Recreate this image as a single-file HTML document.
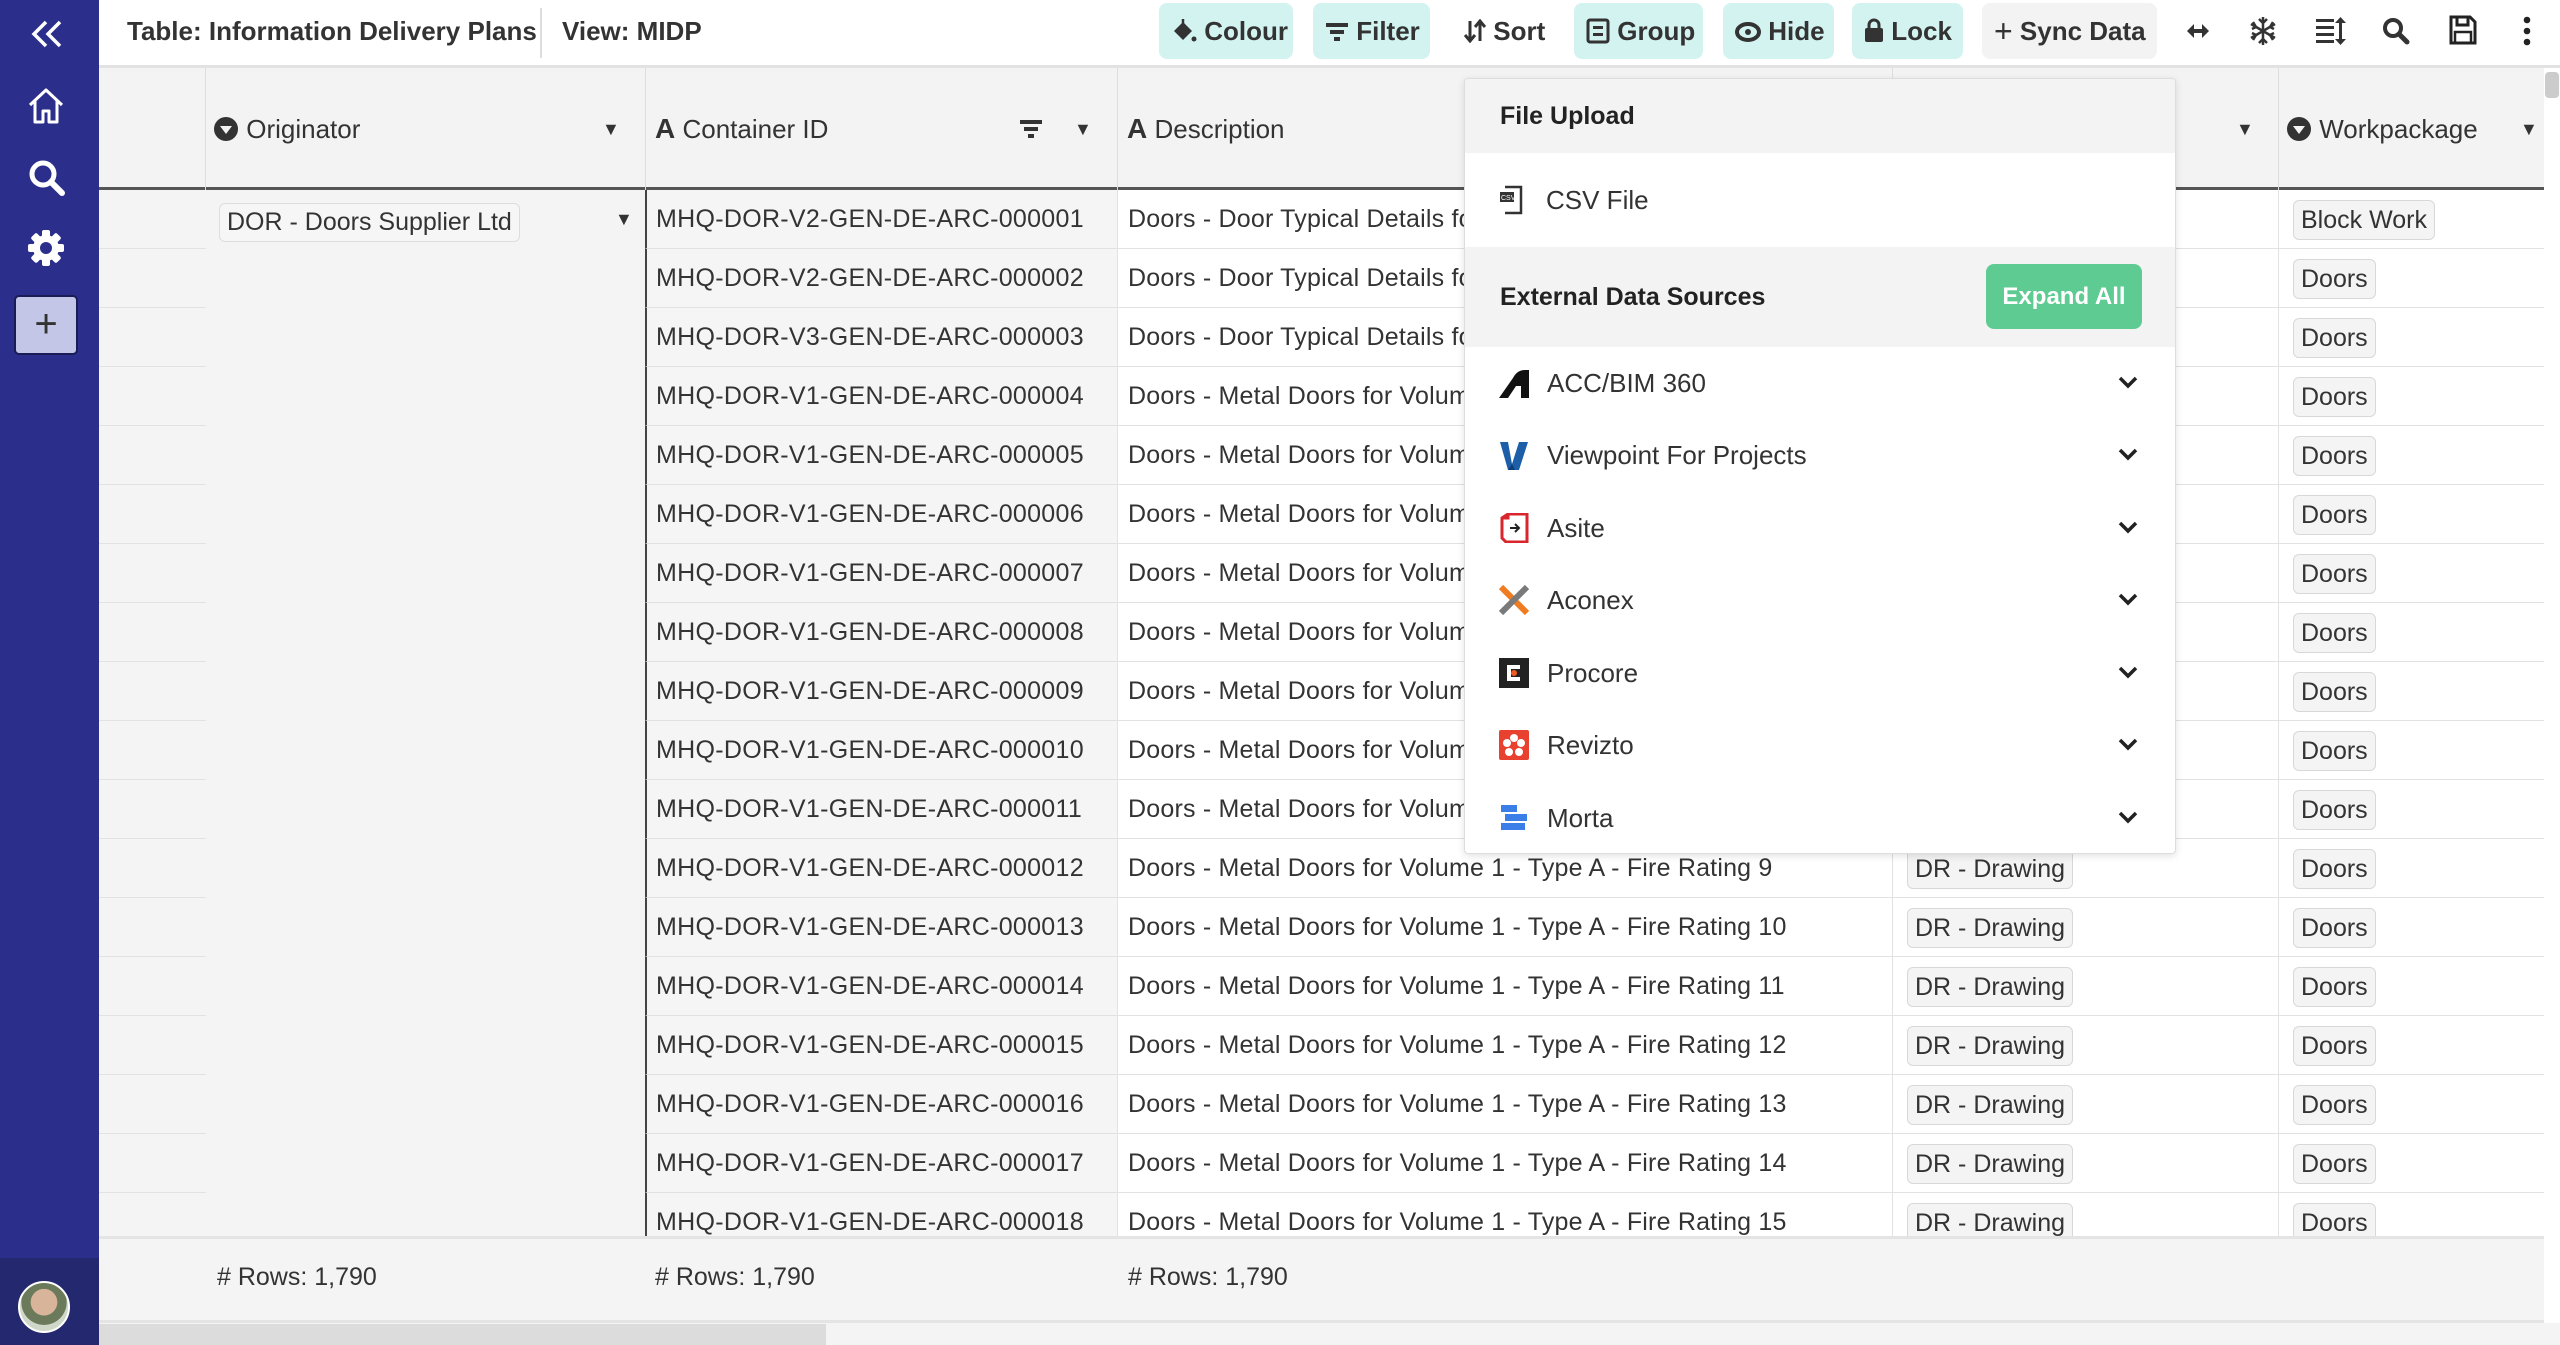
<!DOCTYPE html>
<html><head><meta charset="utf-8"><style>
*{box-sizing:border-box;margin:0;padding:0}
body{width:2560px;height:1345px;overflow:hidden;background:#fff;font-family:"Liberation Sans",sans-serif;color:#333;position:relative}
.abs{position:absolute}
.sb{left:0;top:0;width:99px;height:1345px;background:#2b2f8b}
.tb{left:99px;top:0;width:2461px;height:68px;background:#fff;border-bottom:3px solid #e2e2e2}
.btn{position:absolute;top:3px;height:56px;border-radius:8px;font-size:26px;font-weight:bold;line-height:56px;color:#333;padding-left:12px;white-space:nowrap}
.cy{background:#d3f3f1}
.hdr{left:99px;top:68px;width:2445px;height:122px;background:#f3f3f3;border-bottom:3px solid #555}
.hc{position:absolute;top:68px;height:122px;line-height:122px;font-size:26px;color:#333;white-space:nowrap}
.r{position:absolute;left:0;width:2560px;height:59px}
.c{position:absolute;top:0;height:59px;border-bottom:1px solid #e2e2e2;line-height:58px;white-space:nowrap;overflow:hidden;font-size:25px;color:#333}
.g{left:99px;width:107px;background:#f4f4f4}
.id{left:645px;width:472px;background:#f5f5f5;padding-left:9px;border-left:2px solid #444;letter-spacing:0.3px}
.d{left:1117px;width:775px;background:#fff;padding-left:10px;border-left:1px solid #e2e2e2;letter-spacing:0.2px}
.t{left:1892px;width:386px;background:#fff;border-left:1px solid #e2e2e2}
.w{left:2278px;width:266px;background:#fff;border-left:1px solid #e2e2e2}
.tag{display:inline-block;border:1px solid #d8d8d8;background:#f4f4f4;border-radius:6px;padding:0 7px;line-height:38px;margin-left:14px;vertical-align:middle}
.pop{left:1464px;top:78px;width:712px;height:776px;background:#fff;border:1px solid #ddd;border-radius:4px;box-shadow:0 2px 8px rgba(0,0,0,.12);z-index:10;overflow:hidden}
.it{position:absolute;left:0;width:712px;height:72px;font-size:26px;line-height:72px}
.it .ic{position:absolute;left:34px;top:21px;width:30px;height:30px}
.it .tx{position:absolute;left:82px}
.it .ch{position:absolute;left:652px;top:24px}
</style></head><body>

<div class="abs sb"></div>
<div class="abs" style="left:0;top:1258px;width:99px;height:87px;background:#24286f"></div>
<svg class="abs" style="left:28px;top:18px" width="40" height="32" viewBox="0 0 40 32"><path d="M18 4 L6 16 L18 28 M32 4 L20 16 L32 28" fill="none" stroke="#fff" stroke-width="3.5"/></svg>
<svg class="abs" style="left:26px;top:86px" width="40" height="40" viewBox="0 0 40 40"><path d="M4 19 L20 4 L36 19 M9 15 V36 H17 V25 H23 V36 H31 V15" fill="none" stroke="#fff" stroke-width="3" stroke-linejoin="round"/></svg>
<svg class="abs" style="left:27px;top:158px" width="40" height="40" viewBox="0 0 40 40"><circle cx="16" cy="16" r="11" fill="none" stroke="#fff" stroke-width="5"/><path d="M24 24 L35 35" stroke="#fff" stroke-width="6" stroke-linecap="round"/></svg>
<svg class="abs" style="left:26px;top:228px" width="40" height="40" viewBox="0 0 40 40"><g fill="#fff"><circle cx="20" cy="20" r="13"/><rect x="16" y="2" width="8" height="36" rx="2"/><rect x="16" y="2" width="8" height="36" rx="2" transform="rotate(45 20 20)"/><rect x="16" y="2" width="8" height="36" rx="2" transform="rotate(90 20 20)"/><rect x="16" y="2" width="8" height="36" rx="2" transform="rotate(135 20 20)"/></g><circle cx="20" cy="20" r="6" fill="#2b2f8b"/></svg>
<div class="abs" style="left:14px;top:295px;width:64px;height:60px;background:#c3c6e6;border:2px solid #1a1d55;border-radius:5px;text-align:center;line-height:54px;font-size:40px;color:#333">+</div>
<div class="abs" style="left:18px;top:1281px;width:52px;height:52px;border-radius:50%;background:radial-gradient(circle at 50% 40%,#d8b49a 0 35%,#6b7a5a 36% 60%,#cfd8c8 61%);border:2px solid #fff"></div>

<div class="abs tb"></div>
<div class="abs" style="left:127px;top:14px;font-size:26px;font-weight:bold;line-height:34px;color:#333">Table: Information Delivery Plans</div>
<div class="abs" style="left:540px;top:8px;width:2px;height:50px;background:#ddd"></div>
<div class="abs" style="left:562px;top:14px;font-size:26px;font-weight:bold;line-height:34px;color:#333">View: MIDP</div>

<div class="btn cy" style="left:1159px;width:134px"><svg width="26" height="26" viewBox="0 0 26 26" style="vertical-align:-4px"><path d="M3 13 L12 4 L21 13 L12 22 Z" fill="#333"/><path d="M12 1 V8" stroke="#333" stroke-width="2.5"/><circle cx="23" cy="21" r="2.5" fill="#333"/></svg> Colour</div>
<div class="btn cy" style="left:1313px;width:117px"><svg width="24" height="22" viewBox="0 0 24 22" style="vertical-align:-3px"><rect x="1" y="2" width="22" height="4" fill="#333"/><rect x="5" y="9" width="14" height="4" fill="#333"/><rect x="9" y="16" width="6" height="4" fill="#333"/></svg> Filter</div>
<div class="btn" style="left:1452px;width:104px"><svg width="22" height="24" viewBox="0 0 22 24" style="vertical-align:-3px"><path d="M6 2 V21 M1 16 L6 22 L11 16 M16 22 V3 M11 8 L16 2 L21 8" fill="none" stroke="#333" stroke-width="3"/></svg> Sort</div>
<div class="btn cy" style="left:1574px;width:129px"><svg width="24" height="26" viewBox="0 0 24 26" style="vertical-align:-4px"><rect x="2" y="2" width="20" height="22" rx="2" fill="none" stroke="#333" stroke-width="3"/><rect x="7" y="8" width="10" height="3" fill="#333"/><rect x="7" y="15" width="10" height="3" fill="#333"/></svg> Group</div>
<div class="btn cy" style="left:1723px;width:111px"><svg width="26" height="20" viewBox="0 0 26 20" style="vertical-align:-2px"><ellipse cx="13" cy="10" rx="11" ry="8" fill="none" stroke="#333" stroke-width="4"/><circle cx="13" cy="10" r="3" fill="#333"/></svg> Hide</div>
<div class="btn cy" style="left:1852px;width:111px"><svg width="20" height="26" viewBox="0 0 20 26" style="vertical-align:-3px"><path d="M5 12 V8 a5 5 0 0 1 10 0 V12" fill="none" stroke="#333" stroke-width="3"/><rect x="1" y="11" width="18" height="14" rx="2" fill="#333"/></svg> Lock</div>
<div class="btn" style="left:1982px;width:175px;background:#f3f3f3"><span style="font-weight:normal;font-size:32px;vertical-align:-2px">+</span> Sync Data</div>
<svg class="abs" style="left:2186px;top:22px" width="24" height="18" viewBox="0 0 24 18"><path d="M1 9 L8 2 V16Z M23 9 L16 2 V16Z" fill="#333"/><rect x="7" y="7" width="10" height="4" fill="#333"/></svg>
<svg class="abs" style="left:2249px;top:16px" width="28" height="30" viewBox="0 0 28 30"><g stroke="#333" stroke-width="2.5" fill="none"><path d="M14 1 V29 M2 8 L26 22 M26 8 L2 22"/><path d="M10 3 L14 7 L18 3 M10 27 L14 23 L18 27 M3 13 L7 11 L4 6 M25 13 L21 11 L24 6 M3 17 L7 19 L4 24 M25 17 L21 19 L24 24"/></g></svg>
<svg class="abs" style="left:2316px;top:17px" width="30" height="28" viewBox="0 0 30 28"><g fill="#333"><rect x="0" y="2" width="18" height="3"/><rect x="0" y="9" width="18" height="3"/><rect x="0" y="16" width="18" height="3"/><rect x="0" y="23" width="18" height="3"/><rect x="23" y="4" width="3" height="20"/><path d="M19 6 L24.5 0 L30 6Z M19 22 L24.5 28 L30 22Z"/></g></svg>
<svg class="abs" style="left:2382px;top:17px" width="28" height="28" viewBox="0 0 28 28"><circle cx="11" cy="11" r="8" fill="none" stroke="#333" stroke-width="4"/><path d="M17 17 L25 25" stroke="#333" stroke-width="5" stroke-linecap="round"/></svg>
<svg class="abs" style="left:2449px;top:15px" width="28" height="30" viewBox="0 0 28 30"><path d="M2 2 H21 L26 7 V28 H2 Z" fill="none" stroke="#222" stroke-width="3"/><rect x="8" y="2" width="11" height="8" fill="none" stroke="#222" stroke-width="3"/><rect x="6" y="17" width="16" height="11" fill="none" stroke="#222" stroke-width="2.5"/></svg>
<svg class="abs" style="left:2522px;top:16px" width="10" height="30" viewBox="0 0 10 30"><circle cx="5" cy="4" r="3.3" fill="#222"/><circle cx="5" cy="15" r="3.3" fill="#222"/><circle cx="5" cy="26" r="3.3" fill="#222"/></svg>

<div class="abs hdr"></div>
<div class="abs" style="left:205px;top:68px;width:1px;height:122px;background:#ddd"></div>
<div class="abs" style="left:645px;top:68px;width:1px;height:122px;background:#ddd"></div>
<div class="abs" style="left:1117px;top:68px;width:1px;height:122px;background:#ddd"></div>
<div class="abs" style="left:1892px;top:68px;width:1px;height:122px;background:#ddd"></div>
<div class="abs" style="left:2278px;top:68px;width:1px;height:122px;background:#ddd"></div>
<div class="hc" style="left:213px"><svg width="26" height="26" viewBox="0 0 26 26" style="vertical-align:-4px"><circle cx="13" cy="13" r="12" fill="#333"/><path d="M7 10 H19 L13 18Z" fill="#f3f3f3"/></svg> Originator</div>
<div class="hc" style="left:602px;font-size:18px">▼</div>
<div class="hc" style="left:655px"><b style="font-size:28px">A</b> Container ID</div>
<svg class="abs" style="left:1019px;top:118px" width="24" height="22" viewBox="0 0 24 22"><rect x="1" y="2" width="22" height="4" fill="#333"/><rect x="5" y="9" width="14" height="4" fill="#333"/><rect x="9" y="16" width="6" height="4" fill="#333"/></svg>
<div class="hc" style="left:1074px;font-size:18px">▼</div>
<div class="hc" style="left:1127px"><b style="font-size:28px">A</b> Description</div>
<div class="hc" style="left:2236px;font-size:18px">▼</div>
<div class="hc" style="left:2286px"><svg width="26" height="26" viewBox="0 0 26 26" style="vertical-align:-4px"><circle cx="13" cy="13" r="12" fill="#333"/><path d="M7 10 H19 L13 18Z" fill="#f3f3f3"/></svg> Workpackage</div>
<div class="hc" style="left:2520px;font-size:18px">▼</div>
<div class="abs" style="left:2545px;top:72px;width:14px;height:26px;background:#ccc;border-radius:4px"></div>

<div class="abs" style="left:206px;top:190px;width:439px;height:1046px;background:#f4f4f4"></div>
<div class="abs" style="left:219px;top:203px;height:39px;border:1px solid #ddd;border-radius:6px;background:#f6f6f6;padding:0 7px;font-size:25px;line-height:37px;color:#333;white-space:nowrap">DOR - Doors Supplier Ltd</div>
<div class="abs" style="left:615px;top:205px;font-size:18px;line-height:28px">▼</div>

<div class="r" style="top:190px"><div class="c g"></div><div class="c id">MHQ-DOR-V2-GEN-DE-ARC-000001</div><div class="c d">Doors - Door Typical Details for Volume 1</div><div class="c t"></div><div class="c w"><span class="tag">Block Work</span></div></div>
<div class="r" style="top:249px"><div class="c g"></div><div class="c id">MHQ-DOR-V2-GEN-DE-ARC-000002</div><div class="c d">Doors - Door Typical Details for Volume 2</div><div class="c t"></div><div class="c w"><span class="tag">Doors</span></div></div>
<div class="r" style="top:308px"><div class="c g"></div><div class="c id">MHQ-DOR-V3-GEN-DE-ARC-000003</div><div class="c d">Doors - Door Typical Details for Volume 3</div><div class="c t"></div><div class="c w"><span class="tag">Doors</span></div></div>
<div class="r" style="top:367px"><div class="c g"></div><div class="c id">MHQ-DOR-V1-GEN-DE-ARC-000004</div><div class="c d">Doors - Metal Doors for Volume 1 - Type A - Fire Rating 1</div><div class="c t"></div><div class="c w"><span class="tag">Doors</span></div></div>
<div class="r" style="top:426px"><div class="c g"></div><div class="c id">MHQ-DOR-V1-GEN-DE-ARC-000005</div><div class="c d">Doors - Metal Doors for Volume 1 - Type A - Fire Rating 2</div><div class="c t"></div><div class="c w"><span class="tag">Doors</span></div></div>
<div class="r" style="top:485px"><div class="c g"></div><div class="c id">MHQ-DOR-V1-GEN-DE-ARC-000006</div><div class="c d">Doors - Metal Doors for Volume 1 - Type A - Fire Rating 3</div><div class="c t"></div><div class="c w"><span class="tag">Doors</span></div></div>
<div class="r" style="top:544px"><div class="c g"></div><div class="c id">MHQ-DOR-V1-GEN-DE-ARC-000007</div><div class="c d">Doors - Metal Doors for Volume 1 - Type A - Fire Rating 4</div><div class="c t"></div><div class="c w"><span class="tag">Doors</span></div></div>
<div class="r" style="top:603px"><div class="c g"></div><div class="c id">MHQ-DOR-V1-GEN-DE-ARC-000008</div><div class="c d">Doors - Metal Doors for Volume 1 - Type A - Fire Rating 5</div><div class="c t"></div><div class="c w"><span class="tag">Doors</span></div></div>
<div class="r" style="top:662px"><div class="c g"></div><div class="c id">MHQ-DOR-V1-GEN-DE-ARC-000009</div><div class="c d">Doors - Metal Doors for Volume 1 - Type A - Fire Rating 6</div><div class="c t"></div><div class="c w"><span class="tag">Doors</span></div></div>
<div class="r" style="top:721px"><div class="c g"></div><div class="c id">MHQ-DOR-V1-GEN-DE-ARC-000010</div><div class="c d">Doors - Metal Doors for Volume 1 - Type A - Fire Rating 7</div><div class="c t"></div><div class="c w"><span class="tag">Doors</span></div></div>
<div class="r" style="top:780px"><div class="c g"></div><div class="c id">MHQ-DOR-V1-GEN-DE-ARC-000011</div><div class="c d">Doors - Metal Doors for Volume 1 - Type A - Fire Rating 8</div><div class="c t"></div><div class="c w"><span class="tag">Doors</span></div></div>
<div class="r" style="top:839px"><div class="c g"></div><div class="c id">MHQ-DOR-V1-GEN-DE-ARC-000012</div><div class="c d">Doors - Metal Doors for Volume 1 - Type A - Fire Rating 9</div><div class="c t"><span class="tag">DR - Drawing</span></div><div class="c w"><span class="tag">Doors</span></div></div>
<div class="r" style="top:898px"><div class="c g"></div><div class="c id">MHQ-DOR-V1-GEN-DE-ARC-000013</div><div class="c d">Doors - Metal Doors for Volume 1 - Type A - Fire Rating 10</div><div class="c t"><span class="tag">DR - Drawing</span></div><div class="c w"><span class="tag">Doors</span></div></div>
<div class="r" style="top:957px"><div class="c g"></div><div class="c id">MHQ-DOR-V1-GEN-DE-ARC-000014</div><div class="c d">Doors - Metal Doors for Volume 1 - Type A - Fire Rating 11</div><div class="c t"><span class="tag">DR - Drawing</span></div><div class="c w"><span class="tag">Doors</span></div></div>
<div class="r" style="top:1016px"><div class="c g"></div><div class="c id">MHQ-DOR-V1-GEN-DE-ARC-000015</div><div class="c d">Doors - Metal Doors for Volume 1 - Type A - Fire Rating 12</div><div class="c t"><span class="tag">DR - Drawing</span></div><div class="c w"><span class="tag">Doors</span></div></div>
<div class="r" style="top:1075px"><div class="c g"></div><div class="c id">MHQ-DOR-V1-GEN-DE-ARC-000016</div><div class="c d">Doors - Metal Doors for Volume 1 - Type A - Fire Rating 13</div><div class="c t"><span class="tag">DR - Drawing</span></div><div class="c w"><span class="tag">Doors</span></div></div>
<div class="r" style="top:1134px"><div class="c g"></div><div class="c id">MHQ-DOR-V1-GEN-DE-ARC-000017</div><div class="c d">Doors - Metal Doors for Volume 1 - Type A - Fire Rating 14</div><div class="c t"><span class="tag">DR - Drawing</span></div><div class="c w"><span class="tag">Doors</span></div></div>
<div class="r" style="top:1193px"><div class="c g"></div><div class="c id">MHQ-DOR-V1-GEN-DE-ARC-000018</div><div class="c d">Doors - Metal Doors for Volume 1 - Type A - Fire Rating 15</div><div class="c t"><span class="tag">DR - Drawing</span></div><div class="c w"><span class="tag">Doors</span></div></div>

<div class="abs" style="left:99px;top:1236px;width:2445px;height:87px;background:#f4f4f4;border-top:3px solid #e4e4e4;border-bottom:3px solid #e4e4e4"></div>
<div class="abs" style="left:217px;top:1262px;font-size:25px;line-height:30px">#&nbsp;Rows: 1,790</div>
<div class="abs" style="left:655px;top:1262px;font-size:25px;line-height:30px">#&nbsp;Rows: 1,790</div>
<div class="abs" style="left:1128px;top:1262px;font-size:25px;line-height:30px">#&nbsp;Rows: 1,790</div>
<div class="abs" style="left:99px;top:1323px;width:2461px;height:22px;background:#f4f4f4"></div>
<div class="abs" style="left:99px;top:1324px;width:727px;height:21px;background:#dcdcdd"></div>

<div class="abs pop">
  <div class="abs" style="left:0;top:0;width:712px;height:74px;background:#f3f3f3;font-size:25px;font-weight:bold;line-height:74px;padding-left:35px;color:#222">File Upload</div>
  <div class="abs" style="left:0;top:74px;width:712px;height:94px;font-size:26px;line-height:94px">
    <svg class="abs" style="left:34px;top:32px" width="24" height="30" viewBox="0 0 24 30"><path d="M6 2 H22 V28 H6" fill="none" stroke="#333" stroke-width="2.5"/><rect x="1" y="7" width="14" height="10" fill="#333"/><text x="2" y="15" font-size="7" fill="#fff" font-family="Liberation Sans">CSV</text></svg>
    <span class="abs" style="left:81px">CSV File</span></div>
  <div class="abs" style="left:0;top:168px;width:712px;height:100px;background:#f3f3f3;font-size:25px;font-weight:bold;line-height:100px;padding-left:35px;color:#222">External Data Sources</div>
  <div class="abs" style="left:521px;top:185px;width:156px;height:65px;background:#5dcb92;border-radius:8px;color:#fff;font-size:24px;font-weight:bold;text-align:center;line-height:65px">Expand All</div>

  <div class="it" style="top:268px"><svg class="ic" viewBox="0 0 30 30"><path d="M0 30 L14 10 Q18 2 26 2 H30 V30 H22 V18 H17 L9 30Z" fill="#111"/></svg><span class="tx">ACC/BIM 360</span><svg class="ch" width="22" height="22" viewBox="0 0 22 22"><path d="M3 7 L11 15 L19 7" fill="none" stroke="#222" stroke-width="3.5"/></svg></div>
  <div class="it" style="top:340px"><svg class="ic" viewBox="0 0 30 30"><path d="M1 2 H9 L13 24 L20 2 H29 L20 30 H9Z" fill="#1c5ea8"/><path d="M13 24 L16 30 H9Z" fill="#0d3e78"/></svg><span class="tx">Viewpoint For Projects</span><svg class="ch" width="22" height="22" viewBox="0 0 22 22"><path d="M3 7 L11 15 L19 7" fill="none" stroke="#222" stroke-width="3.5"/></svg></div>
  <div class="it" style="top:413px"><svg class="ic" viewBox="0 0 30 30"><path d="M3 5 L9 1 H28 V29 H7 L3 25Z M9 1 V5 H3" fill="none" stroke="#d8262c" stroke-width="3"/><path d="M11 15 H20 M16 11 L20 15 L16 19" fill="none" stroke="#222" stroke-width="2"/></svg><span class="tx">Asite</span><svg class="ch" width="22" height="22" viewBox="0 0 22 22"><path d="M3 7 L11 15 L19 7" fill="none" stroke="#222" stroke-width="3.5"/></svg></div>
  <div class="it" style="top:485px"><svg class="ic" viewBox="0 0 30 30"><path d="M2 2 L28 28" stroke="#f07c22" stroke-width="6"/><path d="M28 2 L2 28" stroke="#7a7a7a" stroke-width="6"/></svg><span class="tx">Aconex</span><svg class="ch" width="22" height="22" viewBox="0 0 22 22"><path d="M3 7 L11 15 L19 7" fill="none" stroke="#222" stroke-width="3.5"/></svg></div>
  <div class="it" style="top:558px"><svg class="ic" viewBox="0 0 30 30"><rect width="30" height="30" fill="#222"/><path d="M21 9 H10 V21 H21" fill="none" stroke="#fff" stroke-width="4"/><circle cx="15" cy="15" r="3" fill="#f25b1f"/></svg><span class="tx">Procore</span><svg class="ch" width="22" height="22" viewBox="0 0 22 22"><path d="M3 7 L11 15 L19 7" fill="none" stroke="#222" stroke-width="3.5"/></svg></div>
  <div class="it" style="top:630px"><svg class="ic" viewBox="0 0 30 30"><rect width="30" height="30" rx="2" fill="#e9412f"/><g fill="#fff"><circle cx="15" cy="8" r="4"/><circle cx="8" cy="13" r="4"/><circle cx="22" cy="13" r="4"/><circle cx="10" cy="22" r="4"/><circle cx="20" cy="22" r="4"/></g><circle cx="15" cy="15" r="3" fill="#e9412f"/></svg><span class="tx">Revizto</span><svg class="ch" width="22" height="22" viewBox="0 0 22 22"><path d="M3 7 L11 15 L19 7" fill="none" stroke="#222" stroke-width="3.5"/></svg></div>
  <div class="it" style="top:703px"><svg class="ic" viewBox="0 0 30 30"><g fill="#3b7ee8"><rect x="2" y="2" width="16" height="7"/><rect x="6" y="11" width="22" height="7"/><rect x="2" y="20" width="24" height="7"/></g></svg><span class="tx">Morta</span><svg class="ch" width="22" height="22" viewBox="0 0 22 22"><path d="M3 7 L11 15 L19 7" fill="none" stroke="#222" stroke-width="3.5"/></svg></div>
</div>
</body></html>
